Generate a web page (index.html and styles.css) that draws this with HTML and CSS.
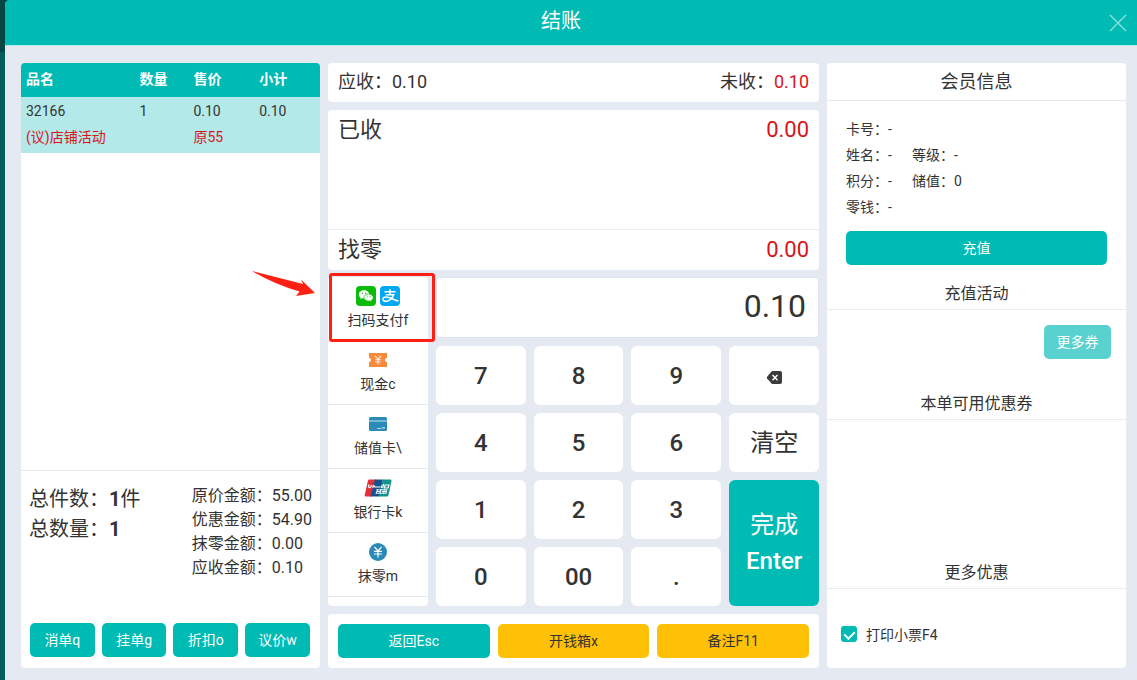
FILE: index.html
```html
<!DOCTYPE html>
<html lang="zh-CN">
<head>
  <meta charset="utf-8">
  <meta name="viewport" content="width=device-width, initial-scale=1">
  <title>结账</title>
  <link rel="stylesheet" href="styles.css">
</head>
<body>

<div class="dialog">
  <header class="dialog-header">
    <h1>结账</h1>
    <button type="button" class="close" aria-label="关闭">
      <svg width="18" height="18" viewBox="0 0 18 18"><path d="M1 1L17 17M17 1L1 17" fill="none" stroke="currentColor" stroke-width="1.4"/></svg>
    </button>
  </header>

  <main class="dialog-body">
    <!-- order -->
    <section class="card order">
      <div class="order-list">
        <table class="goods">
          <thead>
            <tr><th class="col-name">品名</th><th class="col-count">数量</th><th class="col-price">售价</th><th>小计</th></tr>
          </thead>
          <tbody>
            <tr><td>32166</td><td>1</td><td>0.10</td><td>0.10</td></tr>
            <tr class="discount"><td>(议)店铺活动</td><td></td><td>原55</td><td></td></tr>
          </tbody>
        </table>
      </div>
      <div class="summary">
        <div class="totals">
          <p>总件数：<b>1</b>件</p>
          <p>总数量：<b>1</b></p>
        </div>
        <div class="amounts">
          <p>原价金额：55.00</p>
          <p>优惠金额：54.90</p>
          <p>抹零金额：0.00</p>
          <p>应收金额：0.10</p>
        </div>
      </div>
      <div class="order-actions">
        <button type="button" class="btn">消单q</button>
        <button type="button" class="btn">挂单g</button>
        <button type="button" class="btn">折扣o</button>
        <button type="button" class="btn">议价w</button>
      </div>
    </section>

    <!-- payment -->
    <section class="pay">
      <div class="card due">
        <span>应收：0.10</span>
        <span>未收：<em>0.10</em></span>
      </div>
      <div class="card received">
        <div class="received-row grow"><span>已收</span><em>0.00</em></div>
        <div class="received-row change"><span>找零</span><em>0.00</em></div>
      </div>
      <div class="pay-main">
        <div class="card methods">
          <button type="button" class="method">
            <span class="method-icon">
              <svg width="20" height="20" viewBox="0 0 20 20">
                <rect width="20" height="20" rx="4" fill="#0abb07"/>
                <path d="M8 4.300c-3 0-5.200 1.800-5.200 4.100 0 1.300.7 2.400 1.900 3.100l-.5 1.600 2-.9c.6.1 1.200.2 1.800.2 2.900 0 5.200-1.800 5.200-4S11 4.300 8 4.300z" fill="#fff"/>
                <path d="M12.600 8c-2.600 0-4.600 1.600-4.600 3.600s2 3.500 4.600 3.500c.5 0 1-.1 1.500-.2l1.700.8-.4-1.400c1.100-.7 1.800-1.600 1.800-2.700 0-2-2-3.600-4.600-3.600z" fill="#fff" stroke="#0abb07" stroke-width=".7"/>
                <g fill="#0abb07"><circle cx="6.300" cy="7.200" r=".7"/><circle cx="9.800" cy="7.200" r=".7"/><circle cx="11.200" cy="10.700" r=".5"/><circle cx="14.100" cy="10.700" r=".5"/></g>
              </svg>
              <svg width="20" height="20" viewBox="0 0 20 20">
                <rect width="20" height="20" rx="4" fill="#02a9f1"/>
                <path d="M4.500 5.800H15.500M10 3.200V8.600M5.700 8.700H13.600C12.500 12 9.400 15.400 6 15.400C3.800 15.400 3 14.300 3 13.200C3 11.800 4.300 11 6 11C9.200 11 13.500 13.500 18.500 15.100" fill="none" stroke="#fff" stroke-width="1.600"/>
              </svg>
            </span>
            扫码支付f
          </button>
          <button type="button" class="method">
            <span class="method-icon">
              <svg width="18" height="14" viewBox="0 0 18 14">
                <path d="M0 0H18V5A2 2 0 0 0 18 9V14H0V9A2 2 0 0 0 0 5z" fill="#f98a3c"/>
                <path d="M6 2.800L9 6.200L12 2.800M9 6.200V11.500M6.200 6.700H11.800M6.200 9H11.800" fill="none" stroke="#ffe9d8" stroke-width="1.100"/>
              </svg>
            </span>
            现金c
          </button>
          <button type="button" class="method">
            <span class="method-icon">
              <svg width="18" height="14" viewBox="0 0 18 14">
                <rect width="18" height="14" rx="1.500" fill="#2b8ab8"/>
                <path d="M0 4H18" stroke="#c4e2f0" stroke-width="1.200"/>
                <path d="M8 11.500H12M12.500 10.800H16" stroke="#b5daea" stroke-width="1.200"/>
              </svg>
            </span>
            储值卡\
          </button>
          <button type="button" class="method">
            <span class="method-icon">
              <svg width="28" height="18" viewBox="0 0 28 18">
                <path d="M5 .5H12L8 17.500H2Q.3 17.500.7 16L4 1.500Q4.300.5 5 .5z" fill="#e0303a"/>
                <path d="M11 .5H19L15 17.500H6.500z" fill="#15508f"/>
                <path d="M19 .5H26.500Q27.800.5 27.500 2L24.500 16Q24.200 17.500 22.500 17.500H14.500z" fill="#13918c"/>
                <path d="M5 5.500L4.500 7.500Q5.500 10 7 7.500L7.500 6M9 9V7Q10.500 6 10.800 8H16.500M17.500 6.500V9M19.500 5L18.800 8.800M21 6H25L24 9H20.500z" fill="none" stroke="#fff" stroke-width="1.200"/>
                <path d="M12.500 10.800H23M11.500 14.200H22.500M13.500 10L12.300 14.500M17 10L16 14.500M20.500 10L19.500 15M23 10.500L22 14.500M13 12.500H16.500M18 12.500H22.500" fill="none" stroke="#e6f3f7" stroke-width="1"/>
              </svg>
            </span>
            银行卡k
          </button>
          <button type="button" class="method">
            <span class="method-icon">
              <svg width="18" height="18" viewBox="0 0 18 18">
                <circle cx="9" cy="9" r="9" fill="#2b8ab8"/>
                <path d="M5.500 3.800L9 8L12.500 3.800M9 8V14.500M5 8.300H13M5 11H13" fill="none" stroke="#fff" stroke-width="1.200"/>
              </svg>
            </span>
            抹零m
          </button>
        </div>
        <div class="entry">
          <input type="text" class="amount" value="0.10" aria-label="金额">
          <div class="keypad">
            <button type="button" class="key">7</button>
            <button type="button" class="key">8</button>
            <button type="button" class="key">9</button>
            <button type="button" class="key" aria-label="退格">
              <svg width="15" height="13" viewBox="0 0 15 13">
                <path d="M5 0H13Q15 0 15 2V11Q15 13 13 13H5L0 7.200V5.800z" fill="#3c3c3c"/>
                <path d="M5.500 4L10.500 9.200M10.500 4L5.500 9.200" stroke="#fff" stroke-width="1.400"/>
              </svg>
            </button>
            <button type="button" class="key">4</button>
            <button type="button" class="key">5</button>
            <button type="button" class="key">6</button>
            <button type="button" class="key key-text">清空</button>
            <button type="button" class="key">1</button>
            <button type="button" class="key">2</button>
            <button type="button" class="key">3</button>
            <button type="button" class="key key-enter"><span class="key-text">完成</span><br>Enter</button>
            <button type="button" class="key">0</button>
            <button type="button" class="key">00</button>
            <button type="button" class="key">.</button>
          </div>
        </div>
        <div class="highlight"></div>
        <svg class="arrow" width="64" height="28" viewBox="0 0 64 28"><path d="M0 0L51 13L49 8.500L63 22L44 25L47.500 20.500Q22 13 0 0z" fill="#ff2014"/></svg>
      </div>
      <div class="card pay-actions">
        <button type="button" class="btn">返回Esc</button>
        <button type="button" class="btn btn-warn">开钱箱x</button>
        <button type="button" class="btn btn-warn">备注F11</button>
      </div>
    </section>

    <!-- member -->
    <section class="card member">
      <h2>会员信息</h2>
      <div class="member-info">
        <p><span>卡号：-</span></p>
        <p><span>姓名：-</span><span>等级：-</span></p>
        <p><span>积分：-</span><span>储值：0</span></p>
        <p><span>零钱：-</span></p>
        <button type="button" class="btn">充值</button>
      </div>
      <h3>充值活动</h3>
      <div class="coupons">
        <button type="button" class="btn btn-light">更多券</button>
      </div>
      <h3>本单可用优惠券</h3>
      <div class="grow"></div>
      <h3>更多优惠</h3>
      <div class="receipt">
        <input type="checkbox" id="print" checked>
        <label for="print">打印小票F4</label>
      </div>
    </section>
  </main>
</div>

</body>
</html>
```

FILE: styles.css
```css
* {
  box-sizing: border-box;
}
body {
  margin: 0;
  padding-left: 5px;
  background: linear-gradient(#064745 52px, #015e5a 52px);
  font-family: Roboto, "Noto Sans CJK SC", sans-serif;
  font-size: 14px;
  color: #333;
}
h1, h2, h3, p {
  margin: 0;
  font-weight: normal;
}
em {
  font-style: normal;
  color: #d9131a;
}
button, input {
  font-family: inherit;
  color: inherit;
}
button {
  padding: 0;
  border: none;
  cursor: pointer;
}
.grow {
  flex: 1;
}

/* dialog */
.dialog {
  display: flex;
  flex-direction: column;
  min-height: 100vh;
  background: #e5e9f1;
  border-top-left-radius: 5px;
}
.dialog-header {
  display: flex;
  align-items: center;
  height: 46px;
  padding: 0 10px 0 8px;
  background: #00bab4;
  border-bottom: 1px solid #b3e8e8;
  border-top-left-radius: 5px;
  color: #fff;
}
.dialog-header h1 {
  flex: 1;
  padding-bottom: 4px;
  font-size: 20px;
  line-height: 24px;
  text-align: center;
}
.close {
  background: none;
  color: #8fe0dd;
}
.close svg {
  display: block;
}
.dialog-body {
  flex: 1;
  display: grid;
  grid-template-columns: 14fr 23fr 14fr;
  gap: 8px;
  padding: 17px 11px 12px 16px;
}
.card {
  background: #fff;
  border-radius: 4px;
  overflow: hidden;
}
.btn {
  height: 34px;
  padding-bottom: 3px;
  border-radius: 5px;
  background: #00bab4;
  color: #fff;
  font-size: 14px;
}
.btn-warn {
  background: #ffc107;
  color: #333;
}
.btn-light {
  background: #59d1ce;
}

/* order */
.order {
  display: flex;
  flex-direction: column;
}
.order-list {
  flex: 1;
  border-bottom: 1px solid #e4e7ed;
}
.goods {
  width: 100%;
  table-layout: fixed;
  border-collapse: collapse;
}
.goods th, .goods td {
  padding: 0 0 0 5px;
  text-align: left;
}
.goods th {
  height: 34px;
  padding-bottom: 4px;
  background: #00bab4;
  color: #fff;
}
.goods td {
  height: 28px;
  background: #b3e9e8;
}
.goods .discount td {
  padding-bottom: 6px;
  color: #d9131a;
}
.col-name {
  width: 38%;
}
.col-count {
  width: 18%;
}
.col-price {
  width: 22%;
}
.summary {
  display: flex;
  justify-content: space-between;
  height: 152px;
  padding: 13px 8px 0;
}
.totals {
  font-size: 20px;
  line-height: 30px;
}
.amounts {
  font-size: 16px;
  line-height: 24px;
}
.order-actions {
  display: grid;
  grid-template-columns: repeat(4, 1fr);
  gap: 7px;
  padding: 0 10px 11px 9px;
}

/* payment */
.pay {
  display: flex;
  flex-direction: column;
}
.due {
  display: flex;
  justify-content: space-between;
  height: 39px;
  padding: 0 10px;
  margin-bottom: 8px;
  font-size: 18px;
  line-height: 37px;
}
.received {
  display: flex;
  flex-direction: column;
  height: 160px;
  margin-bottom: 7px;
  font-size: 22px;
  line-height: 40px;
}
.received-row {
  display: flex;
  justify-content: space-between;
  padding: 0 10px;
}
.change {
  border-top: 1px solid #e9ecf1;
}
.pay-main {
  flex: 1;
  display: flex;
  gap: 8px;
  position: relative;
  margin-bottom: 8px;
}
.methods {
  width: 100px;
}
.method {
  display: block;
  width: 100%;
  height: 64px;
  padding-bottom: 4px;
  border-bottom: 1px solid #e5e9f1;
  background: #fff;
  font-size: 14px;
  line-height: 22px;
}
.method-icon {
  display: flex;
  align-items: center;
  justify-content: center;
  gap: 4px;
  height: 26px;
}
.entry {
  flex: 1;
  display: flex;
  flex-direction: column;
  gap: 8px;
  min-width: 0;
}
.amount {
  width: 100%;
  height: 61px;
  padding: 0 12px 4px;
  border: 1px solid #dbe4f0;
  border-radius: 4px;
  background: #fff;
  font-size: 32px;
  text-align: right;
}
.keypad {
  flex: 1;
  display: grid;
  grid-template-columns: repeat(4, 1fr);
  grid-template-rows: repeat(4, 1fr);
  gap: 8px;
}
.key {
  border-radius: 6px;
  background: #fff;
  font-size: 24px;
  font-weight: 500;
}
.key-text {
  padding-bottom: 4px;
  font-weight: 400;
}
.key-enter {
  grid-row: span 2;
  background: #00bab4;
  color: #fff;
  line-height: 36px;
}
.pay-actions {
  display: grid;
  grid-template-columns: repeat(3, 1fr);
  gap: 8px;
  padding: 10px;
}

/* callout on the scan payment method */
.highlight {
  position: absolute;
  left: 1px;
  top: -4px;
  width: 106px;
  height: 69px;
  border: 3px solid #ff2014;
  border-radius: 3px;
}
.arrow {
  position: absolute;
  left: -76px;
  top: -6px;
}

/* member */
.member {
  display: flex;
  flex-direction: column;
}
.member h2 {
  border-bottom: 1px solid #e4e7ed;
  font-size: 18px;
  line-height: 37px;
  text-align: center;
}
.member h3 {
  border-bottom: 1px solid #e9ecf1;
  font-size: 16px;
  line-height: 30px;
  text-align: center;
}
.member-info {
  padding: 15px 19px 14px;
  line-height: 26px;
}
.member-info span {
  margin-right: 20px;
}
.member-info .btn {
  display: block;
  width: 100%;
  margin-top: 11px;
}
.coupons {
  height: 79px;
  padding: 15px 15px 0;
  text-align: right;
}
.coupons .btn {
  width: 67px;
}
.receipt {
  display: flex;
  align-items: center;
  gap: 9px;
  height: 79px;
  padding: 11px 14px 0;
}
.receipt input {
  appearance: none;
  display: flex;
  justify-content: center;
  width: 16px;
  height: 16px;
  margin: 0;
  border-radius: 3px;
  background: #00bab4;
}
.receipt input:checked::after {
  content: "";
  width: 5px;
  height: 8px;
  margin-top: 3px;
  border: solid #fff;
  border-width: 0 2px 2px 0;
  transform: rotate(45deg);
}
```
